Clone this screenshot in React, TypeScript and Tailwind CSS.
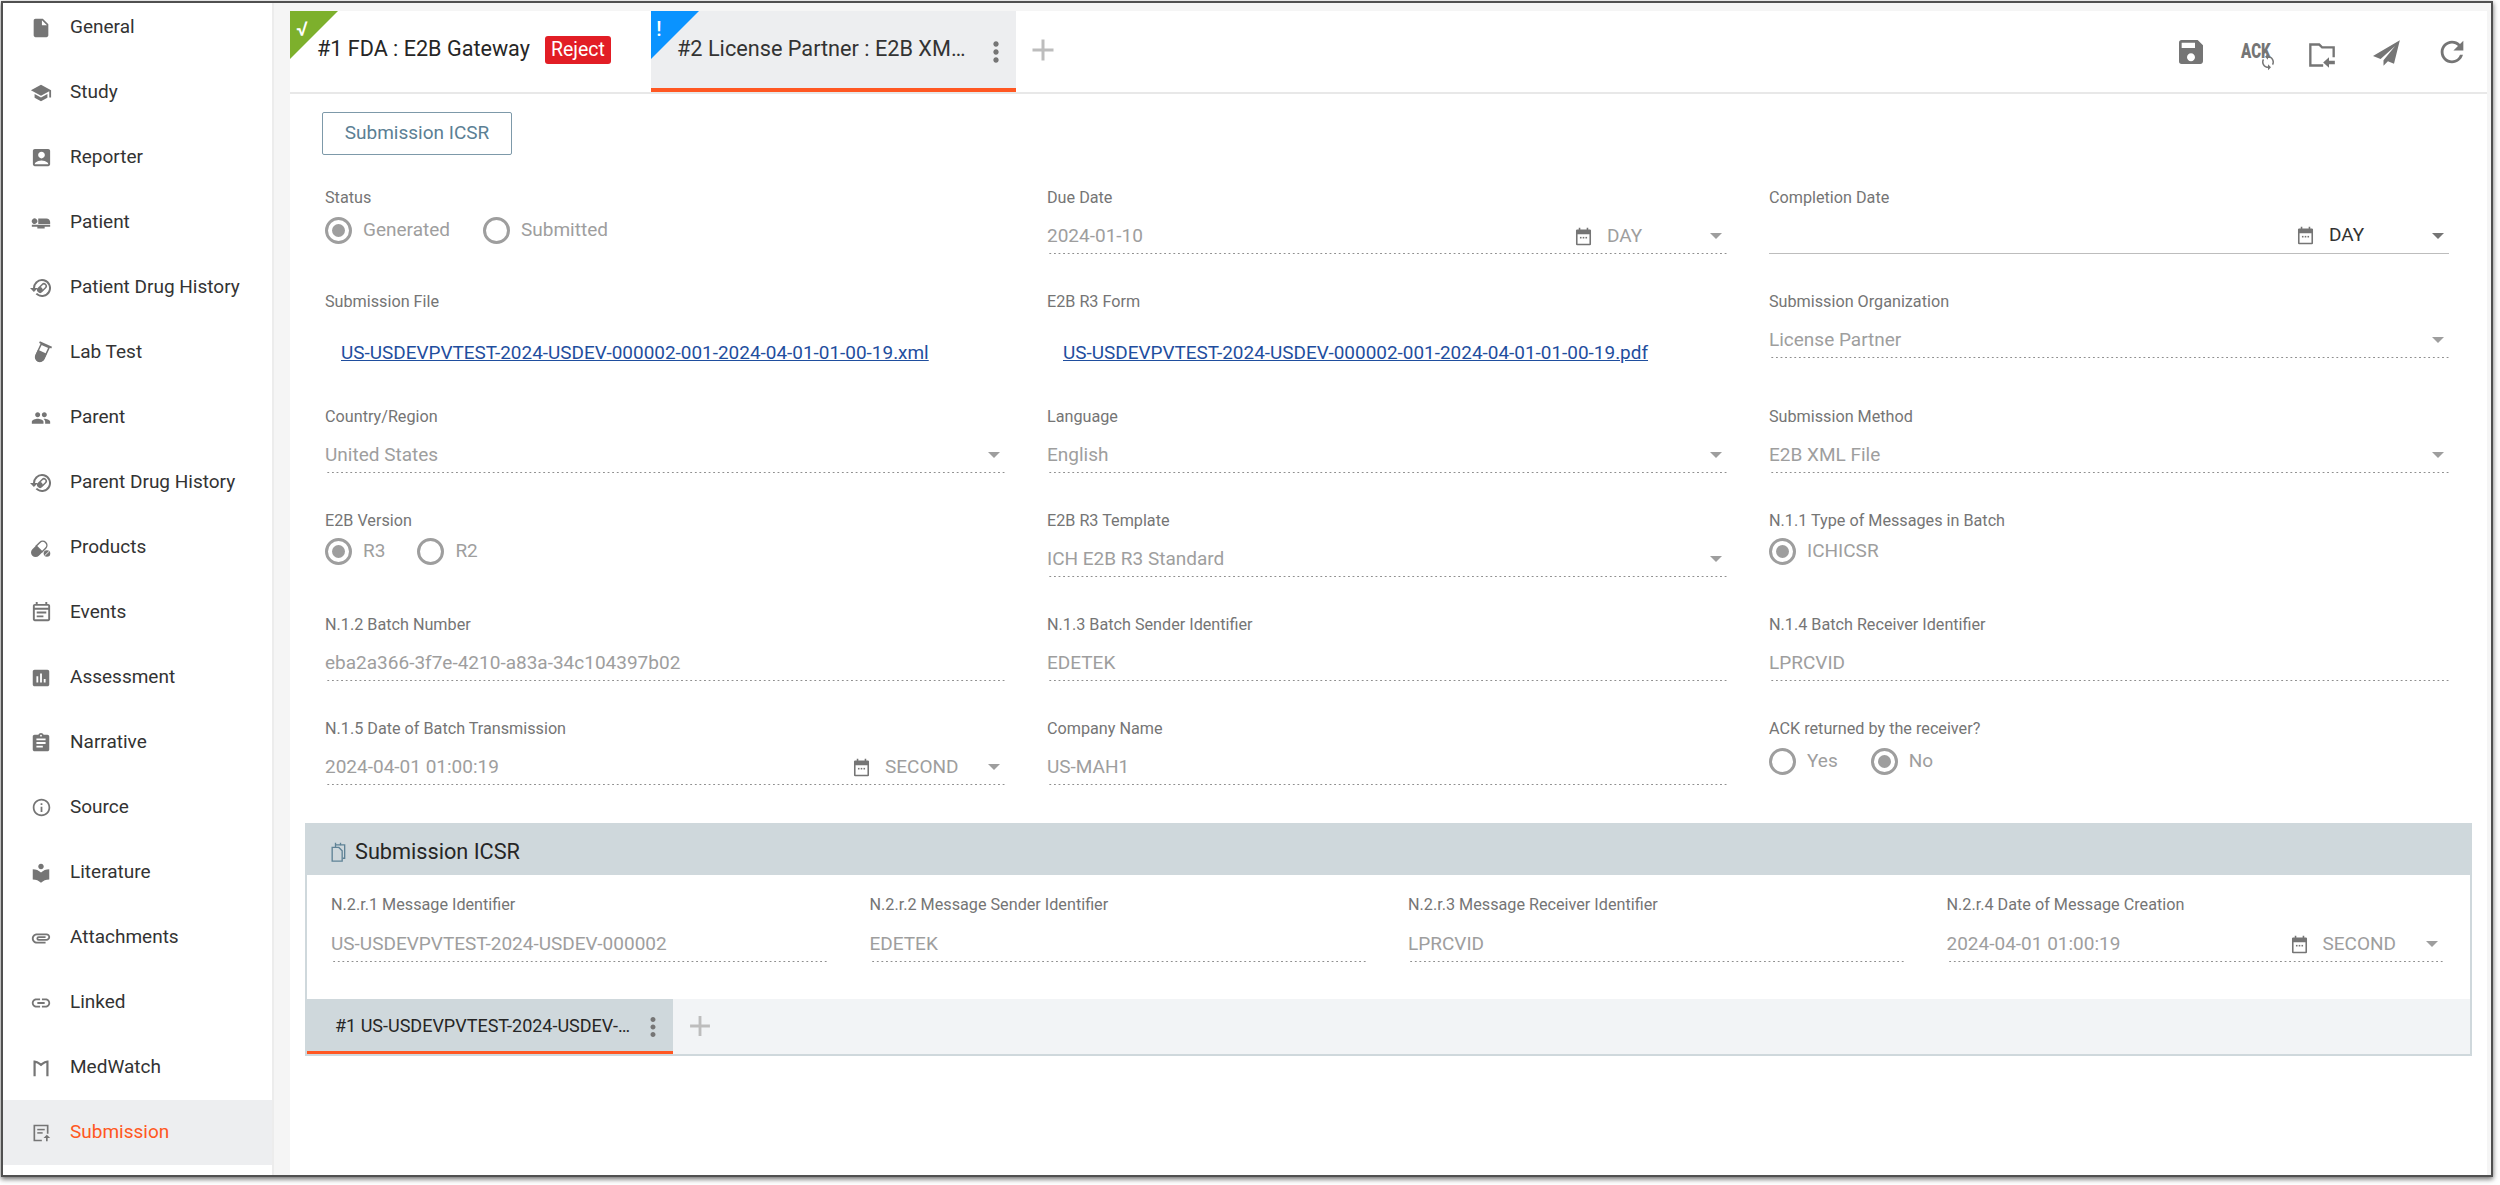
import React from "react";
import {
  MdInsertDriveFile, MdSchool, MdAccountBox, MdAirlineSeatFlat, MdPeople, MdOutlineEventNote, MdAssessment, MdAssignment,
  MdInfoOutline, MdLocalLibrary, MdAttachment, MdLink, MdSave, MdRefresh, MdMoreVert, MdAdd, MdSync,
} from "react-icons/md";

type IconProps = { className?: string };

const DrugHistory = ({ className }: IconProps) => (
  <svg viewBox="0 0 24 24" className={className} fill="currentColor">
    <path d="M13 3a9 9 0 0 0-9 9H1l3.9 4L9 12H6a7 7 0 1 1 2.05 4.95l-1.4 1.42A9 9 0 1 0 13 3z" />
    <g transform="rotate(-45 13 12)">
      <rect x="8" y="9.7" width="10" height="4.6" rx="2.3" fill="none" stroke="currentColor" strokeWidth="1.5" />
      <rect x="8" y="9.7" width="5" height="4.6" rx="2" />
    </g>
  </svg>
);

const Flask = ({ className }: IconProps) => (
  <svg viewBox="0 0 24 24" className={className} fill="currentColor">
    <g transform="rotate(25 12 12)">
      <rect x="5.5" y="2" width="14" height="2" />
      <path d="M8 4h9v13a4.5 4.5 0 0 1-9 0z" fill="none" stroke="currentColor" strokeWidth="1.6" />
      <path d="M7.5 11h10v6a5 5 0 0 1-10 0z" />
    </g>
  </svg>
);

const Pill = ({ className }: IconProps) => (
  <svg viewBox="0 0 24 24" className={className} fill="currentColor">
    <g transform="rotate(-45 10 13)">
      <path d="M10 8.5h5.5a4.5 4.5 0 0 1 0 9H10z" fill="none" stroke="currentColor" strokeWidth="1.6" />
      <path d="M10 8H4.5a5 5 0 0 0 0 10H10z" />
    </g>
    <circle cx="18.5" cy="18" r="3.6" />
    <path d="M15.8 20.6l5.3-5.2" stroke="#fff" strokeWidth="1" />
  </svg>
);

const MedWatch = ({ className }: IconProps) => (
  <svg viewBox="0 0 24 24" className={className} fill="none" stroke="currentColor" strokeWidth="2.4">
    <path d="M5 21V5c3 0 5 2 7 3.5C14 7 16 5 19 5v16" />
  </svg>
);

const SubmissionDoc = ({ className }: IconProps) => (
  <svg viewBox="0 0 24 24" className={className} fill="currentColor">
    <path d="M3 2h18v11h-2V4H5v16h8v2H3z" />
    <rect x="7.5" y="7" width="9" height="1.8" />
    <rect x="7.5" y="11" width="6.5" height="1.8" />
    <path d="M19 14l-4 4h3v4h2v-4h3z" />
  </svg>
);

const Calendar = ({ className }: IconProps) => (
  <svg viewBox="0 0 24 24" className={className} fill="currentColor">
    <path d="M6 1h2v2h8V1h2v2h2a1.5 1.5 0 0 1 1.5 1.5v17A1.5 1.5 0 0 1 20 23H4a1.5 1.5 0 0 1-1.5-1.5v-17A1.5 1.5 0 0 1 4 3h2zM4.5 9v12h15V9z" />
    <rect x="7.5" y="12.5" width="2" height="2" />
    <rect x="11" y="12.5" width="2" height="2" />
    <rect x="14.5" y="12.5" width="2" height="2" />
  </svg>
);

const FolderBack = ({ className }: IconProps) => (
  <svg viewBox="0 0 24 24" className={className} fill="currentColor">
    <path d="M1 2h9l2.5 2.5H23V14h-2V6.5h-9.3L9.2 4H3v16h10v2H1z" />
    <path d="M18 14l-5 4.5 5 4.5v-3h5v-3h-5z" />
  </svg>
);

const Plane = ({ className }: IconProps) => (
  <svg viewBox="0 0 24 24" className={className} fill="currentColor">
    <path d="M23 1L0 14.5l6.5 2.7L19 6 9 18.2V23l3.8-4 5.2 2.2z" />
  </svg>
);

const Clipboards = ({ className }: IconProps) => (
  <svg viewBox="0 0 24 24" className={className} fill="none" stroke="currentColor" strokeWidth="1.6">
    <path d="M9 3.5h11v16h-2.5" />
    <path d="M5 6.5h8l4 4V23H5z" />
    <path d="M9 1v5M15 1v3" />
  </svg>
);

const nav: { label: string; Icon: React.ComponentType<IconProps>; cls: string }[] = [
  { label: "General", Icon: MdInsertDriveFile, cls: "w-[22px] h-[22px]" },
  { label: "Study", Icon: MdSchool, cls: "w-[22px] h-[22px]" },
  { label: "Reporter", Icon: MdAccountBox, cls: "w-[23px] h-[23px]" },
  { label: "Patient", Icon: MdAirlineSeatFlat, cls: "w-[22px] h-[22px]" },
  { label: "Patient Drug History", Icon: DrugHistory, cls: "w-[24px] h-[24px]" },
  { label: "Lab Test", Icon: Flask, cls: "w-[23px] h-[23px]" },
  { label: "Parent", Icon: MdPeople, cls: "w-[20px] h-[20px]" },
  { label: "Parent Drug History", Icon: DrugHistory, cls: "w-[24px] h-[24px]" },
  { label: "Products", Icon: Pill, cls: "w-[22px] h-[22px]" },
  { label: "Events", Icon: MdOutlineEventNote, cls: "w-[23px] h-[23px]" },
  { label: "Assessment", Icon: MdAssessment, cls: "w-[22px] h-[22px]" },
  { label: "Narrative", Icon: MdAssignment, cls: "w-[22px] h-[22px]" },
  { label: "Source", Icon: MdInfoOutline, cls: "w-[21px] h-[21px]" },
  { label: "Literature", Icon: MdLocalLibrary, cls: "w-[22px] h-[22px]" },
  { label: "Attachments", Icon: MdAttachment, cls: "w-[22px] h-[22px]" },
  { label: "Linked", Icon: MdLink, cls: "w-[22px] h-[22px]" },
  { label: "MedWatch", Icon: MedWatch, cls: "w-[22px] h-[22px]" },
  { label: "Submission", Icon: SubmissionDoc, cls: "w-[20px] h-[20px]" },
];

const Label = ({ children }: { children: React.ReactNode }) => (
  <div className="text-[16.2px] leading-5 text-[#757575] whitespace-nowrap">{children}</div>
);

const Caret = ({ dark }: { dark?: boolean }) => (
  <span className={`block w-0 h-0 border-x-[6px] border-x-transparent border-t-[6px] ${dark ? "border-t-[#757575]" : "border-t-[#9e9e9e]"}`} />
);

const Box = ({ children, solid, inner }: { children: React.ReactNode; solid?: boolean; inner?: boolean }) => (
  <div
    className={`${inner ? "mt-2" : "mt-[7px]"} h-[39px] pt-[3px] flex items-center justify-between text-[19px] text-[#9e9e9e] ${
      solid
        ? "border-b border-[#bdbdbd]"
        : "bg-[linear-gradient(to_right,#8f8f8f_2px,transparent_2px)] bg-[length:4.6px_1px] bg-bottom bg-repeat-x"
    }`}
  >
    {children}
  </div>
);

const TextField = ({ label, value, inner }: { label: string; value: string; inner?: boolean }) => (
  <div>
    <Label>{label}</Label>
    <Box inner={inner}><span>{value}</span></Box>
  </div>
);

const SelectField = ({ label, value }: { label: string; value: string }) => (
  <div>
    <Label>{label}</Label>
    <Box>
      <span>{value}</span>
      <span className="mr-[5px]"><Caret /></span>
    </Box>
  </div>
);

const DateField = ({ label, value, unit, active, inner }: { label: string; value?: string; unit: string; active?: boolean; inner?: boolean }) => (
  <div>
    <Label>{label}</Label>
    <Box solid={active} inner={inner}>
      <span>{value}</span>
      <span className="flex items-center w-[155px] shrink-0">
        <Calendar className="w-[19px] h-[19px] ml-[2px] text-[#757575]" />
        <span className={`ml-[14px] w-[105px] ${active ? "text-[#333333]" : ""}`}>{unit}</span>
        <span className="ml-[-2px]"><Caret dark={active} /></span>
      </span>
    </Box>
  </div>
);

const Radio = ({ checked, label, className = "" }: { checked?: boolean; label: string; className?: string }) => (
  <span className={`flex items-center ${className}`}>
    <span className="w-[27px] h-[27px] rounded-full border-[3px] border-[#9e9e9e] flex items-center justify-center">
      {checked && <span className="w-[13px] h-[13px] rounded-full bg-[#9e9e9e]" />}
    </span>
    <span className="ml-[11px] text-[19px] text-[#9e9e9e]">{label}</span>
  </span>
);

const RadioField = ({ label, tight, children }: { label: string; tight?: boolean; children: React.ReactNode }) => (
  <div>
    <Label>{label}</Label>
    <div className={`${tight ? "mt-[6px]" : "mt-[8px]"} flex items-center`}>{children}</div>
  </div>
);

const LinkField = ({ label, value }: { label: string; value: string }) => (
  <div className="h-[77px]">
    <Label>{label}</Label>
    <a className="block mt-[30px] ml-[16px] text-[18.95px] leading-[22px] text-[#1f4e9e] underline whitespace-nowrap">{value}</a>
  </div>
);

const Corner = ({ color, mark, markClass }: { color: string; mark: string; markClass: string }) => (
  <>
    <span className={`absolute left-0 top-0 w-[48px] h-[48px] [clip-path:polygon(0_0,100%_0,0_100%)] ${color}`} />
    <span className={`absolute top-[6px] w-[14px] text-center text-[20px] leading-6 font-medium text-white ${markClass}`}>{mark}</span>
  </>
);

export default function App() {
  return (
    <div className="w-[2500px] h-[1185px] bg-white overflow-hidden pt-px pl-px font-['Roboto',sans-serif]">
      <div className="w-[2492px] h-[1176px] flex border-2 border-[#505050] shadow-[0_2px_5px_rgba(0,0,0,0.6)] bg-[#f5f5f5]">
        <aside className="w-[269px] shrink-0 bg-white overflow-hidden">
          <div className="-mt-[8px]">
            {nav.map(({ label, Icon, cls }) => {
              const active = label === "Submission";
              return (
                <div key={label} className={`h-[65px] flex items-center ${active ? "bg-[#edeef0]" : ""}`}>
                  <span className="w-[38px] ml-[19px] flex justify-center text-[#757575] shrink-0">
                    <Icon className={cls} />
                  </span>
                  <span className={`ml-[10px] text-[19px] ${active ? "text-[#ff5722]" : "text-[#333333]"}`}>{label}</span>
                </div>
              );
            })}
          </div>
        </aside>
        <div className="w-[18px] shrink-0 border-l-2 border-[#ececec]" />
        <main className="w-[2197px] shrink-0 mt-[8px] bg-white">
          <div className="h-[83px] border-b-2 border-[#e8e8e8] flex">
            <div className="relative w-[361px] h-[81px] flex pt-[25px] items-start">
              <Corner color="bg-[#7db02c]" mark="√" markClass="left-[5px]" />
              <span className="ml-[27px] text-[21.6px] leading-[26px] text-[#262626] whitespace-nowrap">#1 FDA : E2B Gateway</span>
              <span className="ml-[15px] h-[28px] w-[66px] flex items-center justify-center bg-[#e21d25] rounded-[3px] text-white text-[19.5px]">Reject</span>
            </div>
            <div className="relative w-[365px] h-[81px] bg-[#edeef0] border-b-4 border-[#ff5722] flex pt-[25px] items-start">
              <Corner color="bg-[#0a93ff]" mark="!" markClass="left-[1px]" />
              <span className="ml-[26px] text-[21.7px] leading-[26px] text-[#333333] whitespace-nowrap">#2 License Partner : E2B XM…</span>
              <MdMoreVert className="absolute left-[329px] top-[25px] w-[32px] h-[32px] text-[#757575]" />
            </div>
            <MdAdd className="ml-[9px] mt-[21px] w-[36px] h-[36px] text-[#bdbdbd]" />
            <div className="ml-auto mr-[3px] flex items-start text-[#757575]">
              <span className="w-[65.5px] flex justify-center"><MdSave className="mt-[25px] w-[32px] h-[32px]" /></span>
              <span className="relative w-[65.5px] h-[70px]">
                <span className="absolute left-[17px] top-[29px] origin-left scale-x-[0.72] text-[21px] leading-[22px] font-black text-[#757575]">ACK</span>
                <MdSync className="absolute left-[35px] top-[42px] w-[18px] h-[18px]" />
              </span>
              <span className="w-[65.5px] flex justify-center"><FolderBack className="mt-[30px] w-[28px] h-[28px]" /></span>
              <span className="w-[65.5px] flex justify-center"><Plane className="mt-[28px] w-[28px] h-[28px]" /></span>
              <span className="w-[64px] flex justify-center"><MdRefresh className="mt-[24px] w-[34px] h-[34px]" /></span>
            </div>
          </div>

          <div className="px-[32px] pt-[18px]">
            <button className="w-[190px] h-[43px] border-[1.5px] border-[#7d99a9] rounded-[2px] text-[19px] text-[#5b7f94]">Submission ICSR</button>
            <div className="mt-[33px] ml-[3px] grid grid-cols-[680px_680px_680px] gap-x-[42px] gap-y-[38px]">
              <RadioField label="Status">
                <Radio checked label="Generated" />
                <Radio label="Submitted" className="ml-[33px]" />
              </RadioField>
              <DateField label="Due Date" value="2024-01-10" unit="DAY" />
              <DateField label="Completion Date" unit="DAY" active />

              <LinkField label="Submission File" value="US-USDEVPVTEST-2024-USDEV-000002-001-2024-04-01-01-00-19.xml" />
              <LinkField label="E2B R3 Form" value="US-USDEVPVTEST-2024-USDEV-000002-001-2024-04-01-01-00-19.pdf" />
              <SelectField label="Submission Organization" value="License Partner" />

              <SelectField label="Country/Region" value="United States" />
              <SelectField label="Language" value="English" />
              <SelectField label="Submission Method" value="E2B XML File" />

              <RadioField label="E2B Version" tight>
                <Radio checked label="R3" />
                <Radio label="R2" className="ml-[32px]" />
              </RadioField>
              <SelectField label="E2B R3 Template" value="ICH E2B R3 Standard" />
              <RadioField label="N.1.1 Type of Messages in Batch" tight>
                <Radio checked label="ICHICSR" />
              </RadioField>

              <TextField label="N.1.2 Batch Number" value="eba2a366-3f7e-4210-a83a-34c104397b02" />
              <TextField label="N.1.3 Batch Sender Identifier" value="EDETEK" />
              <TextField label="N.1.4 Batch Receiver Identifier" value="LPRCVID" />

              <DateField label="N.1.5 Date of Batch Transmission" value="2024-04-01 01:00:19" unit="SECOND" />
              <TextField label="Company Name" value="US-MAH1" />
              <RadioField label="ACK returned by the receiver?">
                <Radio label="Yes" />
                <Radio checked label="No" className="ml-[33px]" />
              </RadioField>
            </div>
          </div>

          <section className="mt-[38px] mx-[15px] border-x-[2px] border-b-[2px] border-[#cfd8dc]">
            <div className="h-[52px] bg-[#cfd8dc] flex items-center pl-[21px] pt-[6px]">
              <Clipboards className="w-[20px] h-[20px] text-[#5f8296]" />
              <span className="ml-[7px] text-[21.7px] text-[#262626]">Submission ICSR</span>
            </div>
            <div className="h-[124px] pt-[20px] pl-[24px] grid grid-cols-[496px_496px_496px_496px] gap-x-[42.5px]">
              <TextField inner label="N.2.r.1 Message Identifier" value="US-USDEVPVTEST-2024-USDEV-000002" />
              <TextField inner label="N.2.r.2 Message Sender Identifier" value="EDETEK" />
              <TextField inner label="N.2.r.3 Message Receiver Identifier" value="LPRCVID" />
              <DateField inner label="N.2.r.4 Date of Message Creation" value="2024-04-01 01:00:19" unit="SECOND" />
            </div>
            <div className="h-[55px] bg-[#f2f4f6] flex">
              <div className="relative w-[366px] h-[55px] bg-[#cfd8dc] border-b-[3px] border-[#ff5722] flex items-center">
                <span className="ml-[28px] text-[18px] text-[#262626] whitespace-nowrap">#1 US-USDEVPVTEST-2024-USDEV-…</span>
                <MdMoreVert className="absolute left-[331px] top-[13px] w-[30px] h-[30px] text-[#757575]" />
              </div>
              <MdAdd className="ml-[10px] mt-[10px] w-[34px] h-[34px] text-[#bdbdbd]" />
            </div>
          </section>
        </main>
        <div className="flex-1" />
      </div>
    </div>
  );
}
